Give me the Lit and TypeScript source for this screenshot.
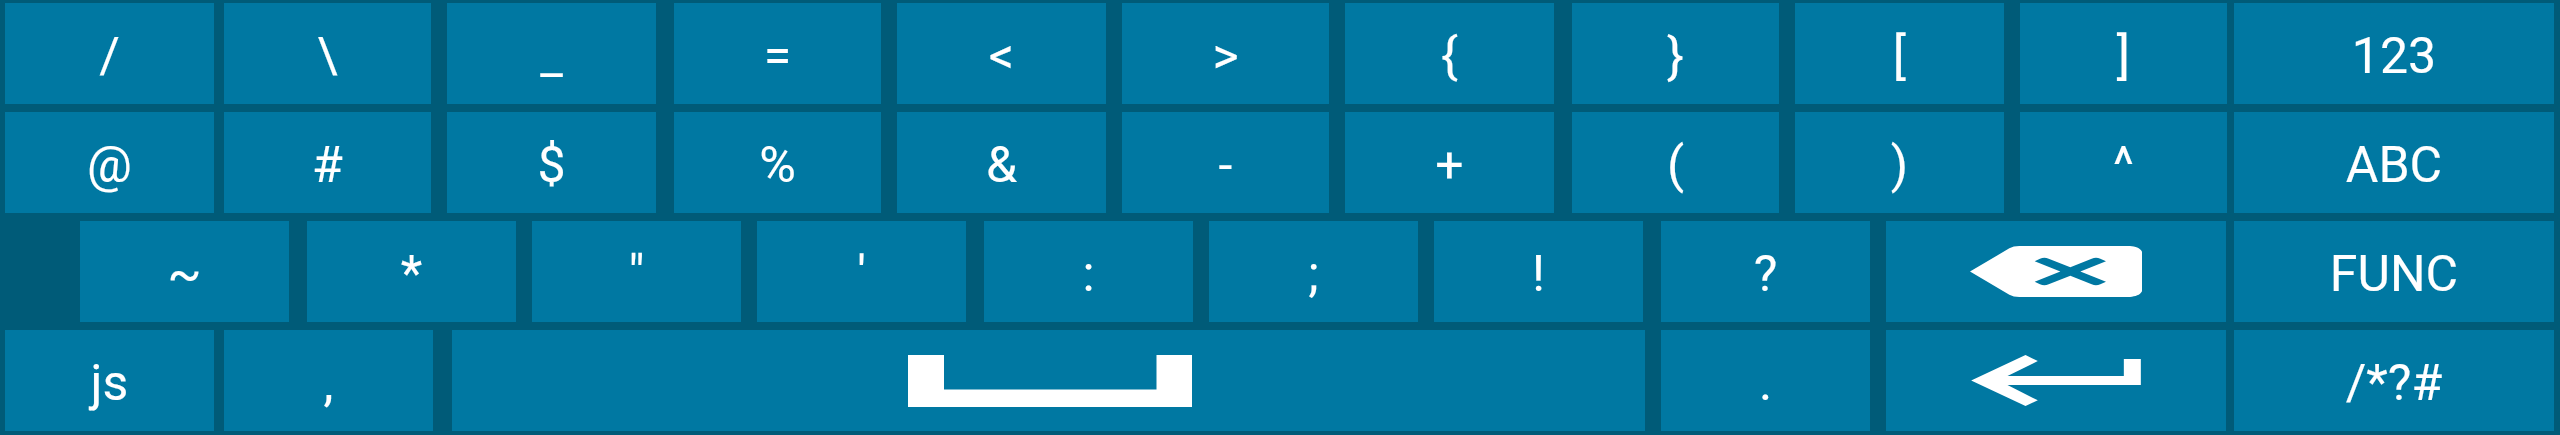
import { LitElement, html, svg, css } from "lit";
import { customElement, property } from "lit/decorators.js";

/** One key: label (or icon name), width, and the space in front of it. */
interface Key {
  label: string;
  width: number;
  gap: number;
  icon?: "space" | "backspace" | "enter";
}

const k = (label: string, width: number, gap: number, icon?: Key["icon"]): Key => ({ label, width, gap, icon });

const ROWS: Key[][] = [
  [
    k("/", 209, 5), k("\\", 207, 10), k("_", 209, 16), k("=", 207, 18), k("<", 209, 16), k(">", 207, 16),
    k("{", 209, 16), k("}", 207, 18), k("[", 209, 16), k("]", 207, 16), k("123", 320, 7),
  ],
  [
    k("@", 209, 5), k("#", 207, 10), k("$", 209, 16), k("%", 207, 18), k("&", 209, 16), k("-", 207, 16),
    k("+", 209, 16), k("(", 207, 18), k(")", 209, 16), k("^", 207, 16), k("ABC", 320, 7),
  ],
  [
    k("~", 209, 80), k("*", 209, 18), k('"', 209, 16), k("'", 209, 16), k(":", 209, 18), k(";", 209, 16),
    k("!", 209, 16), k("?", 209, 18), k("Backspace", 340, 16, "backspace"), k("FUNC", 320, 8),
  ],
  [
    k("js", 209, 5), k(",", 209, 10), k("Space", 1193, 19, "space"), k(".", 209, 16),
    k("Enter", 340, 16, "enter"), k("/*?#", 320, 8),
  ],
];

const ICONS = {
  space: html`<svg class="space" viewBox="0 0 284 52">
    ${svg`<path d="M0 0H36V34.5H248.5V0H284V52H0Z"/>`}
  </svg>`,
  backspace: html`<svg class="backspace" viewBox="60 48 516 153">
    ${svg`<path fill-rule="evenodd" d="M60 124.5L178 55Q190 48 208 48H540C556 50 570 53 576 65V184C570 196 556 199 540 201H208Q190 201 178 194Z
      M254 94L270 86Q283 80 296 86L361 112L425 86Q438 80 451 86L468 94L391 124.5L468 155L451 163Q438 169 425 163L361 137L296 163Q283 169 270 163L254 155L331 124.5Z"/>`}
  </svg>`,
  enter: html`<svg class="enter" viewBox="64 375 509 153">
    ${svg`<path d="M64 451.5L227 375L264 393L173 438H522V387H573V465H173L264 511L227 528Z"/>`}
  </svg>`,
};

@customElement("keyboard-key")
class KeyboardKey extends LitElement {
  @property({ attribute: false }) key!: Key;

  static styles = css`
    :host {
      display: flex;
      align-items: center;
      justify-content: center;
      background: #0078a2;
      color: #fff;
      font: 50px/60px Roboto, sans-serif;
      -webkit-text-stroke: 0.15px #fff;
    }
    .label { padding-top: 4px; white-space: pre; }
    svg { display: block; fill: #fff; }
    .space { width: 284px; height: 52px; padding-left: 3px; }
    .backspace { width: 172px; height: 51px; }
    .enter { width: 170px; height: 51px; }
  `;

  render() {
    return this.key.icon ? ICONS[this.key.icon] : html`<span class="label">${this.key.label}</span>`;
  }
}

@customElement("app-root")
class AppRoot extends LitElement {
  static styles = css`
    :host { display: block; }
    .board {
      box-sizing: border-box;
      width: 2560px;
      height: 435px;
      padding: 3px 0 4px;
      display: flex;
      flex-direction: column;
      gap: 8px;
      background: #005b78;
      overflow: hidden;
    }
    .row { display: flex; height: 101px; flex: none; }
    .key { flex: none; }
  `;

  render() {
    return html`<div class="board">
      ${ROWS.map(
        (row) => html`<div class="row">
          ${row.map(
            (key) => html`<keyboard-key
              class="key"
              .key=${key}
              style="width:${key.width}px;margin-left:${key.gap}px"
            ></keyboard-key>`,
          )}
        </div>`,
      )}
    </div>`;
  }
}
